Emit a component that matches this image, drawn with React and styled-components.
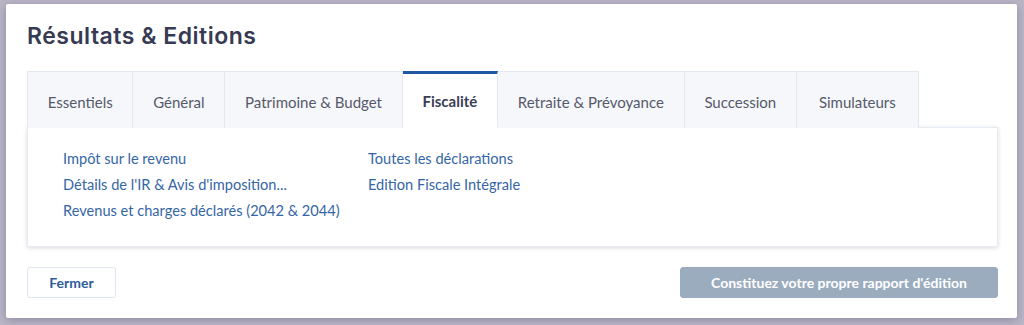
import React, { useState } from "react";
import styled, { createGlobalStyle } from "styled-components";

const GlobalStyle = createGlobalStyle`
	html, body {
		margin: 0;
		padding: 0;
		background: #bab6c6;
	}
	* {
		box-sizing: border-box;
	}
`;

const Backdrop = styled.div`
	width: 1024px;
	height: 325px;
	padding: 4px 7px 7px 6px;
`;

const Modal = styled.div`
	background: #fff;
	height: 314px;
	border-radius: 2px;
	box-shadow: 0 2px 10px rgba(60, 50, 90, 0.35);
	padding: 18px 19px 20px 21px;
	display: flex;
	flex-direction: column;
`;

const Title = styled.h2`
	margin: 0 0 21px 0;
	font-family: "Inter", "Lato", sans-serif;
	font-size: 23px;
	line-height: 28px;
	font-weight: 600;
	color: #363a52;
	letter-spacing: 0.5px;
`;

const TabBar = styled.div`
	display: flex;
	height: 56px;
`;

const TabButton = styled.button`
	font-family: "Lato", "Open Sans", sans-serif;
	font-size: 15px;
	color: ${(p) => (p.active ? "#3b3f55" : "#55596a")};
	font-weight: ${(p) => (p.active ? 700 : 400)};
	background: ${(p) => (p.active ? "#fff" : "#f5f7fa")};
	border: 1px solid #e4e9f1;
	border-left: none;
	border-top: ${(p) => (p.active ? "3px solid #1f58a3" : "1px solid #e4e9f1")};
	border-bottom: ${(p) => (p.active ? "1px solid #fff" : "none")};
	padding: ${(p) => (p.active ? "1px" : "3px")} 19.75px 0;
	margin-bottom: -1px;
	position: relative;
	z-index: ${(p) => (p.active ? 2 : 1)};
	cursor: pointer;
	&:first-child {
		border-left: 1px solid #e4e9f1;
	}
	&:last-child {
		padding-right: 22px;
		padding-left: 22px;
	}
	&:focus {
		outline: none;
	}
`;

const Panel = styled.div`
	background: #fff;
	border: 1px solid #e8ecf2;
	box-shadow: 0 1px 4px rgba(40, 50, 80, 0.18);
	height: 120px;
	padding: 18px 35px;
	display: grid;
	grid-template-columns: 305px 300px;
	grid-auto-flow: column;
	grid-template-rows: repeat(3, 26px);
`;

const Link = styled.a`
	font-family: "Lato", "Open Sans", sans-serif;
	font-size: 14.6px;
	line-height: 26px;
	color: #3566a6;
	text-decoration: none;
	white-space: nowrap;
	cursor: pointer;
`;

const Footer = styled.div`
	margin-top: auto;
	display: flex;
	justify-content: space-between;
	align-items: center;
`;

const Button = styled.button`
	font-family: "Lato", "Open Sans", sans-serif;
	font-size: 14px;
	font-weight: 700;
	height: 31px;
	border-radius: 3px;
	padding: 0 20px;
	width: ${(p) => (p.primary ? "318px" : "89px")};
	color: ${(p) => (p.primary ? "#fff" : "#2c5c9c")};
	background: ${(p) => (p.primary ? "#9bacbf" : "#fff")};
	border: 1px solid ${(p) => (p.primary ? "#9bacbf" : "#dfe6f2")};
	cursor: pointer;
`;

const tabs = [
	"Essentiels",
	"Général",
	"Patrimoine & Budget",
	"Fiscalité",
	"Retraite & Prévoyance",
	"Succession",
	"Simulateurs"
];

const links = [
	"Impôt sur le revenu",
	"Détails de l'IR & Avis d'imposition...",
	"Revenus et charges déclarés (2042 & 2044)",
	"Toutes les déclarations",
	"Edition Fiscale Intégrale"
];

export default function App() {
	const [tab, setTab] = useState("Fiscalité");
	return (
		<Backdrop>
			<GlobalStyle />
			<Modal>
				<Title>Résultats &amp; Editions</Title>
				<TabBar>
					{tabs.map((t) => (
						<TabButton key={t} active={tab === t} onClick={() => setTab(t)}>
							{t}
						</TabButton>
					))}
				</TabBar>
				<Panel>
					{links.map((l) => (
						<Link key={l}>{l}</Link>
					))}
				</Panel>
				<Footer>
					<Button>Fermer</Button>
					<Button primary>Constituez votre propre rapport d'édition</Button>
				</Footer>
			</Modal>
		</Backdrop>
	);
}
